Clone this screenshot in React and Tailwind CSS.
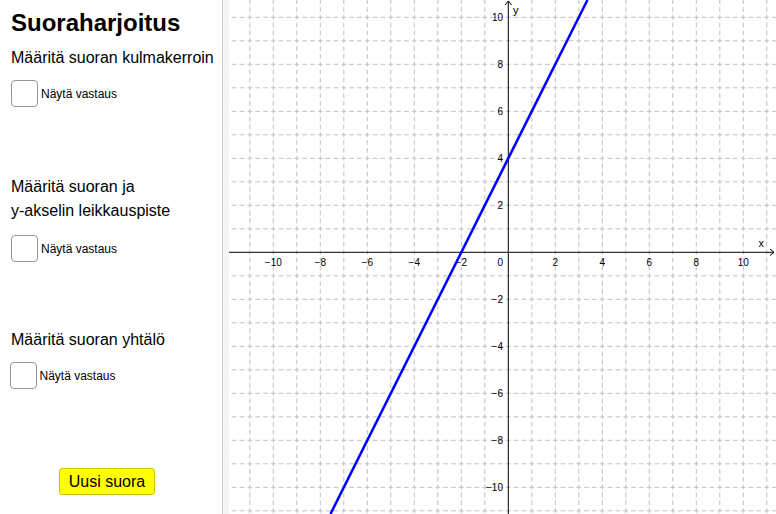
import React from 'react';

const S = 23.5;
const OX = 279.3;
const OY = 252.3;
const W = 547;
const H = 514;

const range = (a, b) => Array.from({ length: b - a + 1 }, (_, i) => a + i);
const fmt = (n) => (n < 0 ? `\u2212${-n}` : `${n}`);

function Graph() {
  const vks = range(-11, 11).filter((k) => k !== 0);
  const hks = range(-11, 10).filter((k) => k !== 0);
  const dash = { strokeDasharray: '4.8 3.03', strokeDashoffset: 2.4 };

  // y = 2x + 4
  const toX = (x) => OX + x * S;
  const toY = (y) => OY - y * S;
  const yTop = OY / S;
  const yBot = -(H - OY) / S;
  const x1 = (yTop - 4) / 2;
  const x2 = (yBot - 4) / 2;

  return (
    <svg width={W} height={H} className="block" style={{ fontFamily: '"Liberation Sans", Arial, sans-serif' }}>
      {vks.map((k) => (
        <line
          key={`v${k}`}
          x1={toX(k)}
          x2={toX(k)}
          y1={OY - 12 * S}
          y2={OY + 12 * S}
          stroke="#c0c0c0"
          strokeWidth="1"
          {...dash}
        />
      ))}
      {hks.map((k) => (
        <line
          key={`h${k}`}
          y1={toY(k)}
          y2={toY(k)}
          x1={OX - 12 * S}
          x2={OX + 12 * S}
          stroke="#c0c0c0"
          strokeWidth="1"
          {...dash}
        />
      ))}

      {/* axes */}
      <line x1="0" x2={W - 2} y1={OY} y2={OY} stroke="#000" strokeWidth="1" />
      <line x1={OX} x2={OX} y1="1" y2={H} stroke="#000" strokeWidth="1" />
      <polyline points={`${W - 6},${OY - 3.2} ${W - 2},${OY} ${W - 6},${OY + 3.2}`} fill="none" stroke="#000" strokeWidth="1" />
      <polyline points={`${OX - 3.3},5 ${OX},1 ${OX + 3.3},5`} fill="none" stroke="#000" strokeWidth="1" />
      <text x={W - 17.5} y={247.3} fontSize="11" fill="#000">x</text>
      <text x={OX + 4.7} y={13.5} fontSize="11" fill="#000">y</text>

      {/* tick labels */}
      {[-10, -8, -6, -4, -2, 2, 4, 6, 8, 10].map((n) => (
        <text key={`xl${n}`} x={toX(n)} y={OY + 13.5} fontSize="10" fill="#000" textAnchor="middle">
          {fmt(n)}
        </text>
      ))}
      {[-10, -8, -6, -4, -2, 2, 4, 6, 8, 10].map((n) => (
        <text key={`yl${n}`} x={OX - 5.3} y={toY(n) + 3.6} fontSize="10" fill="#000" textAnchor="end">
          {fmt(n)}
        </text>
      ))}
      <text x={OX - 5.3} y={OY + 13.5} fontSize="10" fill="#000" textAnchor="end">0</text>

      <line x1={toX(x1)} y1={0} x2={toX(x2)} y2={H} stroke="#0000ff" strokeWidth="2.5" />
    </svg>
  );
}

function Check({ className = '' }) {
  return (
    <div className={`flex items-center ${className}`}>
      <div className="w-[27px] h-[27px] rounded-[4px] border-[1.5px] border-[#959595] bg-white" />
      <span className="ml-[3px] text-[12px] leading-[14px] text-black">Näytä vastaus</span>
    </div>
  );
}

export default function App() {
  return (
    <div className="w-[776px] h-[514px] flex bg-white overflow-hidden font-['Liberation_Sans',Arial,sans-serif] text-black">
      <div className="w-[222px] shrink-0 flex flex-col pt-[9px]">
        <h1 className="pl-[11px] text-[24px] leading-[28px] font-bold">Suoraharjoitus</h1>
        <p className="pl-[11px] mt-[11px] text-[16px] leading-[20px]">Määritä suoran kulmakerroin</p>
        <Check className="pl-[11px] mt-[12px]" />

        <p className="pl-[11px] mt-[68px] text-[16px] leading-[24px]">
          Määritä suoran ja
          <br />
          y-akselin leikkauspiste
        </p>
        <Check className="pl-[11px] mt-[12px]" />

        <p className="pl-[11px] mt-[68px] text-[16px] leading-[20px]">Määritä suoran yhtälö</p>
        <Check className="pl-[9.5px] mt-[12px]" />

        <div className="mt-[79px] ml-[59px]">
          <button className="w-[96px] h-[27px] rounded-[3px] bg-[#ffff00] border-[1.5px] border-[#c8c800] text-[16px] leading-none text-black">
            Uusi suora
          </button>
        </div>
      </div>
      <div className="w-[7px] shrink-0 border-l border-[#cfcfcf] bg-[#f4f4f4]" />
      <div className="flex-1 overflow-hidden">
        <Graph />
      </div>
    </div>
  );
}
